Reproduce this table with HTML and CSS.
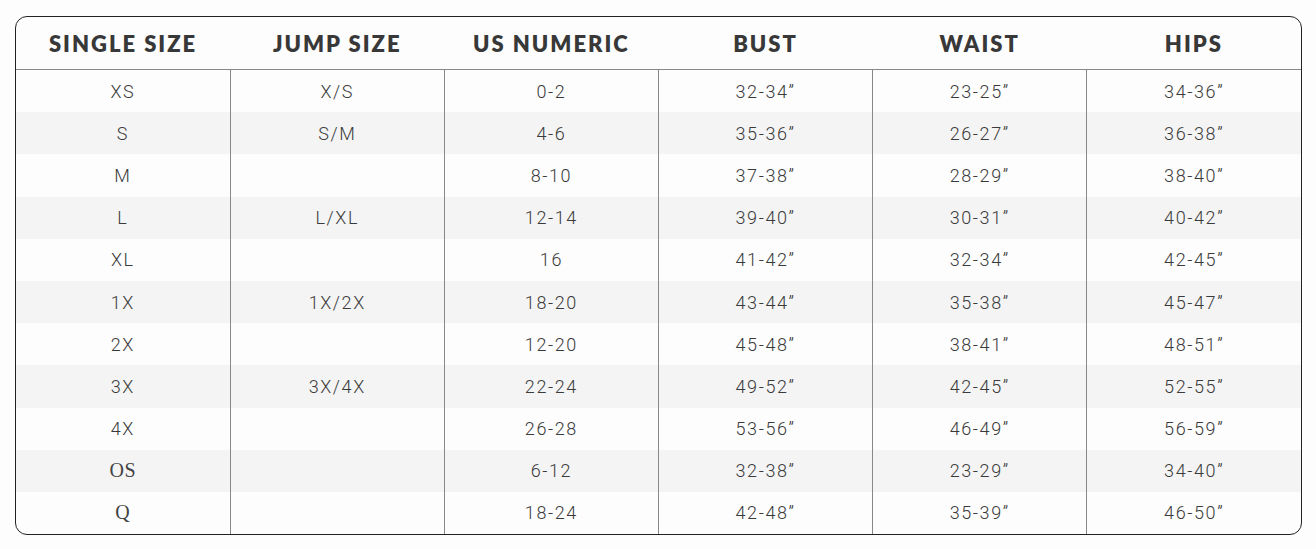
FILE: index.html
```html
<!DOCTYPE html>
<html>
<head>
<meta charset="utf-8">
<link rel="stylesheet" href="styles.css">
</head>
<body>
<div class="chart">
  <table class="size-table">
    <thead>
      <tr><th>SINGLE SIZE</th><th>JUMP SIZE</th><th>US NUMERIC</th><th>BUST</th><th>WAIST</th><th>HIPS</th></tr>
    </thead>
    <tbody>
      <tr><td>XS</td><td>X/S</td><td>0-2</td><td>32-34”</td><td>23-25”</td><td>34-36”</td></tr>
      <tr><td>S</td><td>S/M</td><td>4-6</td><td>35-36”</td><td>26-27”</td><td>36-38”</td></tr>
      <tr><td>M</td><td></td><td>8-10</td><td>37-38”</td><td>28-29”</td><td>38-40”</td></tr>
      <tr><td>L</td><td>L/XL</td><td>12-14</td><td>39-40”</td><td>30-31”</td><td>40-42”</td></tr>
      <tr><td>XL</td><td></td><td>16</td><td>41-42”</td><td>32-34”</td><td>42-45”</td></tr>
      <tr><td>1X</td><td>1X/2X</td><td>18-20</td><td>43-44”</td><td>35-38”</td><td>45-47”</td></tr>
      <tr><td>2X</td><td></td><td>12-20</td><td>45-48”</td><td>38-41”</td><td>48-51”</td></tr>
      <tr><td>3X</td><td>3X/4X</td><td>22-24</td><td>49-52”</td><td>42-45”</td><td>52-55”</td></tr>
      <tr><td>4X</td><td></td><td>26-28</td><td>53-56”</td><td>46-49”</td><td>56-59”</td></tr>
      <tr><td class="serif">OS</td><td></td><td>6-12</td><td>32-38”</td><td>23-29”</td><td>34-40”</td></tr>
      <tr><td class="serif">Q</td><td></td><td>18-24</td><td>42-48”</td><td>35-39”</td><td>46-50”</td></tr>
    </tbody>
  </table>
</div>
</body>
</html>
```

FILE: styles.css
```css
html, body {
  margin: 0;
  padding: 0;
  background: #fdfdfd;
}
body {
  padding: 16px 14px 0 15px;
}
.chart {
  border: 1.5px solid #222;
  border-radius: 12px;
  overflow: hidden;
  background: #fdfdfd;
}
.size-table {
  width: 100%;
  border-collapse: collapse;
  table-layout: fixed;
}
.size-table th {
  height: 52px;
  font-family: Lato, "Liberation Sans", sans-serif;
  font-weight: 800;
  font-size: 22px;
  letter-spacing: 2px;
  color: #383838;
  text-align: center;
  border-bottom: 1px solid #888;
  padding: 0;
}
.size-table td {
  height: 42.2px;
  padding: 0;
  text-align: center;
  font-family: Roboto, "Liberation Sans", sans-serif;
  font-weight: 300;
  font-size: 18px;
  letter-spacing: 1.6px;
  color: #3a3a3a;
  border-left: 1px solid #888;
}
.size-table td:first-child {
  border-left: none;
}
.size-table tbody tr:nth-child(even) td {
  background: #f4f4f4;
}
.size-table td.serif {
  font-family: "Liberation Serif", serif;
  font-size: 20px;
  font-weight: 400;
  letter-spacing: 0.5px;
  color: #444;
}
```
